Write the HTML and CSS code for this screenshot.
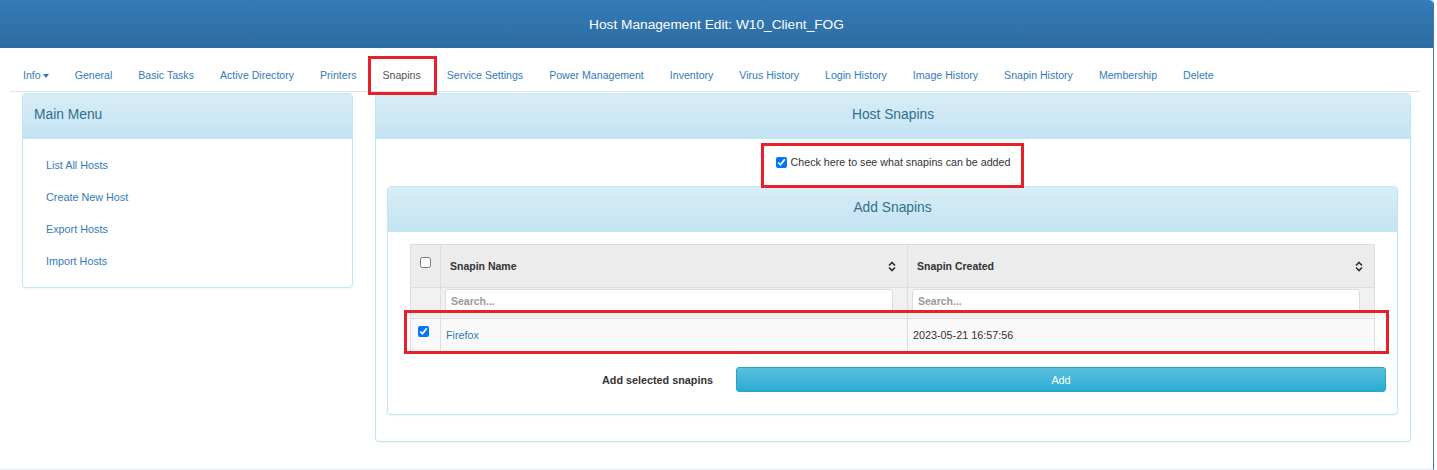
FILE: index.html
```html
<!DOCTYPE html>
<html lang="en">
<head>
<meta charset="utf-8">
<title>Host Management Edit: W10_Client_FOG</title>
<link rel="stylesheet" href="styles.css">
</head>
<body>
<div class="page">
  <div class="page-heading">Host Management Edit: W10_Client_FOG</div>
  <div class="page-body">
    <ul class="tabs">
      <li><a href="#">Info<span class="caret"></span></a></li>
      <li><a href="#">General</a></li>
      <li><a href="#">Basic Tasks</a></li>
      <li><a href="#">Active Directory</a></li>
      <li><a href="#">Printers</a></li>
      <li class="active marked"><a href="#">Snapins</a></li>
      <li><a href="#">Service Settings</a></li>
      <li><a href="#">Power Management</a></li>
      <li><a href="#">Inventory</a></li>
      <li><a href="#">Virus History</a></li>
      <li><a href="#">Login History</a></li>
      <li><a href="#">Image History</a></li>
      <li><a href="#">Snapin History</a></li>
      <li><a href="#">Membership</a></li>
      <li><a href="#">Delete</a></li>
    </ul>

    <div class="content">
      <div class="panel menu-panel">
        <div class="panel-heading left">Main Menu</div>
        <ul class="menu">
          <li><a href="#">List All Hosts</a></li>
          <li><a href="#">Create New Host</a></li>
          <li><a href="#">Export Hosts</a></li>
          <li><a href="#">Import Hosts</a></li>
        </ul>
      </div>

      <div class="panel main-panel">
        <div class="panel-heading">Host Snapins</div>
        <div class="main-body">
          <div class="check-row">
            <label class="check-label marked"><input type="checkbox" checked> Check here to see what snapins can be added</label>
          </div>

          <div class="panel inner-panel">
            <div class="panel-heading">Add Snapins</div>
            <div class="inner-body">
              <div class="table-wrap">
                <table class="snapins">
                  <colgroup>
                    <col class="c-check">
                    <col class="c-name">
                    <col class="c-date">
                  </colgroup>
                  <thead>
                    <tr class="head-row">
                      <th class="cb-cell"><input type="checkbox"></th>
                      <th><div class="th-inner">Snapin Name<svg class="sort" width="8" height="11" viewBox="0 0 8 11"><path d="M1 4.5 L4 1.5 L7 4.5 M1 6.5 L4 9.5 L7 6.5" fill="none" stroke="#333" stroke-width="1.7"/></svg></div></th>
                      <th><div class="th-inner">Snapin Created<svg class="sort" width="8" height="11" viewBox="0 0 8 11"><path d="M1 4.5 L4 1.5 L7 4.5 M1 6.5 L4 9.5 L7 6.5" fill="none" stroke="#333" stroke-width="1.7"/></svg></div></th>
                    </tr>
                    <tr class="search-row">
                      <th></th>
                      <th><input class="search" type="text" placeholder="Search..."></th>
                      <th><input class="search" type="text" placeholder="Search..."></th>
                    </tr>
                  </thead>
                  <tbody>
                    <tr class="data-row">
                      <td class="cb-cell"><input type="checkbox" checked></td>
                      <td><a href="#">Firefox</a></td>
                      <td>2023-05-21 16:57:56</td>
                    </tr>
                  </tbody>
                </table>
                <div class="row-mark"></div>
              </div>
              <div class="add-row">
                <span class="add-label">Add selected snapins</span>
                <button class="btn-add" type="button">Add</button>
              </div>
            </div>
          </div>
        </div>
      </div>
    </div>
  </div>
</div>
</body>
</html>
```

FILE: styles.css
```css
* { box-sizing: border-box; }

html, body {
  margin: 0;
  padding: 0;
  background: #fff;
}

body {
  font-family: "Liberation Sans", Arial, sans-serif;
  font-size: 10.8px;
  color: #333;
}

a { color: #337ab7; text-decoration: none; }

.page {
  width: 1434px;
  height: 470px;
  border-right: 1px solid #337ab7;
  border-bottom: 1px solid #e3edf4;
  border-top-right-radius: 4px;
  overflow: hidden;
}

.page-heading {
  height: 48px;
  display: flex;
  align-items: center;
  justify-content: center;
  background: linear-gradient(#347bb8, #2d6ca2);
  color: #fff;
  font-size: 13.7px;
  border-top-right-radius: 4px;
  padding-left: 0;
}

.page-body {
  padding: 0 13px 0 10px;
}

/* tabs */
.tabs {
  list-style: none;
  margin: 10px 0 0;
  padding: 0;
  display: flex;
  border-bottom: 1px solid #e2e2e2;
}

.tabs li { position: relative; }

.tabs a {
  display: block;
  padding: 9px 13px 7px;
  line-height: 17px;
  font-size: 10.58px;
  color: #337ab7;
}

.tabs li.active a { color: #555; }

.caret {
  display: inline-block;
  width: 0;
  height: 0;
  margin-left: 2px;
  vertical-align: middle;
  border-top: 4px solid #337ab7;
  border-left: 3.5px solid transparent;
  border-right: 3.5px solid transparent;
}

.marked::after {
  content: "";
  position: absolute;
  border: 3px solid #e8202a;
  pointer-events: none;
}

.tabs li.marked::after {
  top: -2px;
  left: -1px;
  right: -3px;
  bottom: -4px;
}

/* content */
.content {
  display: flex;
  align-items: flex-start;
  padding-left: 12px;
  margin-top: 1px;
  gap: 22px;
}

.panel {
  background: #fff;
  border: 1px solid #bce8f1;
  border-radius: 4px;
  box-shadow: 0 1px 2px rgba(0, 0, 0, .05);
  overflow: hidden;
}

.panel-heading {
  height: 45px;
  display: flex;
  align-items: center;
  justify-content: center;
  background: linear-gradient(#d9edf7, #c4e3f3);
  border-bottom: 1px solid #bce8f1;
  color: #31708f;
  font-size: 13.8px;
  padding-bottom: 3px;
}

.panel-heading.left {
  justify-content: flex-start;
  padding-left: 11px;
}

.menu-panel { width: 331px; }

.menu {
  list-style: none;
  margin: 0;
  padding: 10px 0 10px 23px;
}

.menu li {
  line-height: 32px;
  font-size: 10.8px;
}

.main-panel { width: 1036px; }

.main-body {
  padding: 11px 12px 26px 11px;
}

.check-row {
  height: 24px;
  display: flex;
  align-items: center;
  justify-content: center;
  margin-bottom: 12px;
  padding-left: 1px;
}

.check-label {
  position: relative;
  display: flex;
  align-items: center;
  gap: 4px;
  font-size: 10.7px;
  color: #333;
}

.check-label input { margin: 0; }

.check-label.marked::after {
  top: -13px;
  left: -15px;
  right: -14px;
  bottom: -20px;
}

input[type="checkbox"] {
  width: 11px;
  height: 11px;
  margin: 0;
}

.inner-body {
  padding: 12px 22px 22px 22px;
}

.table-wrap { position: relative; }

.snapins {
  width: 964px;
  border-collapse: collapse;
  table-layout: fixed;
}

.c-check { width: 30px; }
.c-name { width: 467px; }
.c-date { width: 467px; }

.snapins th,
.snapins td {
  border: 1px solid #dedede;
  text-align: left;
  padding: 0;
}

.head-row th {
  height: 43px;
  background: #ececec;
  font-weight: bold;
  font-size: 10.5px;
  color: #333;
}

.head-row .cb-cell {
  vertical-align: top;
  padding: 12px 0 0 9px;
}

.th-inner {
  display: flex;
  align-items: center;
  justify-content: space-between;
  padding: 0 11px 0 9px;
}

.sort { display: block; }

.search-row th {
  height: 31px;
  background: #f1f1f1;
  padding: 1px 14px 0 4px;
  vertical-align: top;
}

.search {
  display: block;
  width: 100%;
  height: 23px;
  border: 1px solid #dcdcdc;
  border-radius: 3px;
  background: #fff;
  padding: 0 5px;
  font-family: "Liberation Sans", Arial, sans-serif;
  font-size: 10.5px;
  font-weight: bold;
}

.search::placeholder {
  color: #999;
  font-weight: bold;
}

.data-row td {
  height: 34px;
  background: #f9f9f9;
  padding-left: 5px;
  padding-bottom: 1px;
  font-size: 10.8px;
}

.data-row .cb-cell {
  padding: 7px 0 0 7px;
  vertical-align: top;
}

.row-mark {
  position: absolute;
  left: -6px;
  top: 66px;
  width: 985px;
  height: 44px;
  border: 3px solid #e8202a;
  pointer-events: none;
}

.add-row {
  display: grid;
  grid-template-columns: 1fr 650px;
  column-gap: 22px;
  align-items: center;
  margin-top: 14px;
  margin-right: -11px;
}

.add-label {
  text-align: right;
  font-weight: bold;
  font-size: 10.8px;
  color: #333;
  padding-right: 1px;
}

.btn-add {
  height: 25px;
  border: 1px solid #28a4c9;
  border-radius: 3px;
  background: linear-gradient(#5bc0de, #2aabd2);
  color: #fff;
  font-family: "Liberation Sans", Arial, sans-serif;
  font-size: 10.8px;
  padding: 0;
}
```
